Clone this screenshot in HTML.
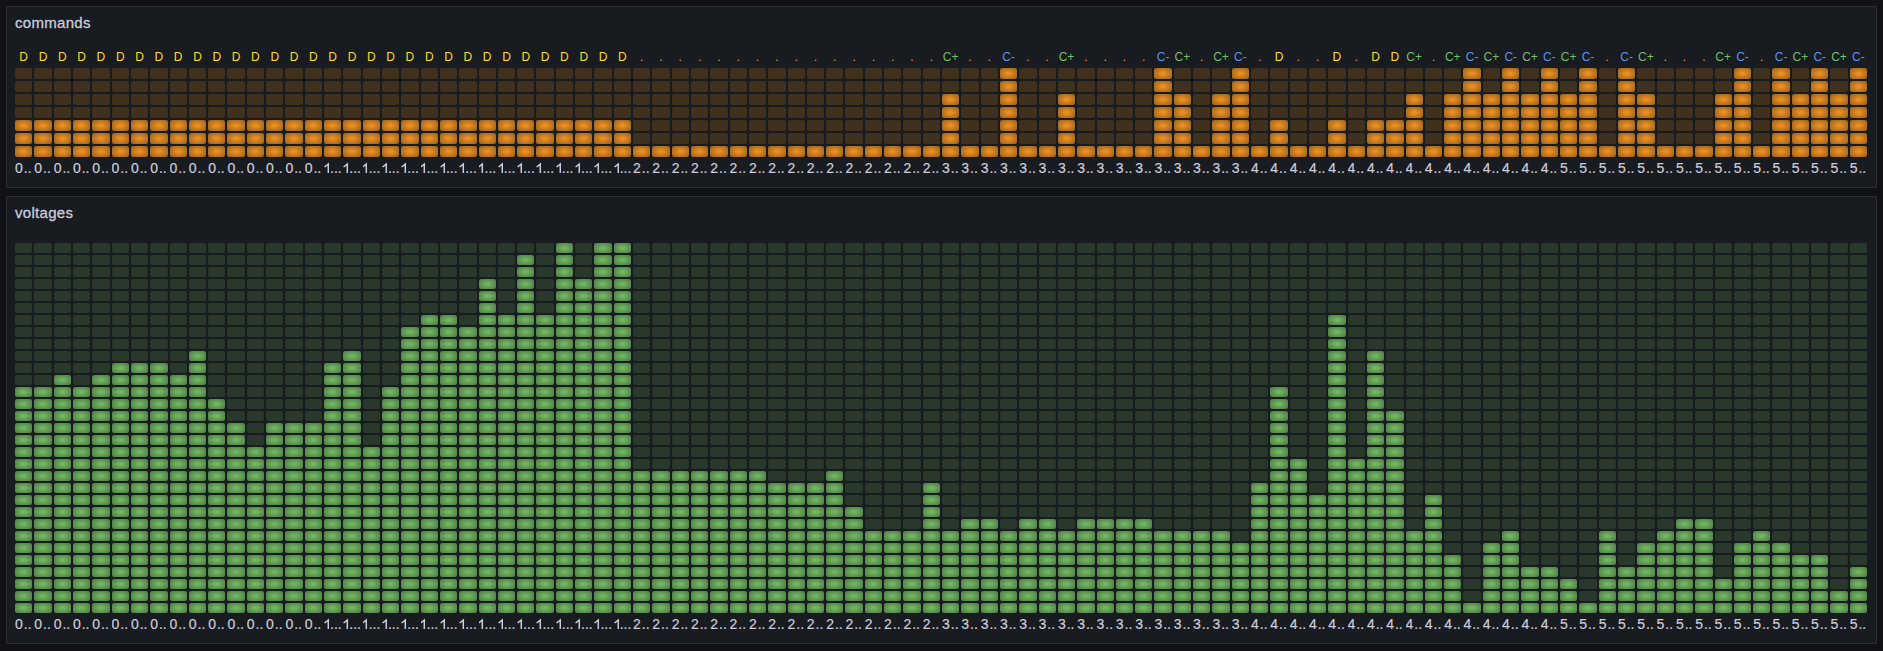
<!DOCTYPE html><html><head><meta charset="utf-8"><style>

*{box-sizing:border-box;margin:0;padding:0}
html,body{width:1883px;height:651px;overflow:hidden;background:#111217;font-family:"Liberation Sans",sans-serif;color:#ccccdc}
.p{position:absolute;left:6px;width:1871px;background:#181b1f;border:1px solid rgba(204,204,220,0.12);border-radius:2px}
.t{position:absolute;left:8px;font-size:15px;letter-spacing:0.3px;line-height:18px;white-space:nowrap;-webkit-text-stroke:0.3px #ccccdc}
.row{position:absolute;left:15px;width:1853px;display:flex;justify-content:space-between}
.c{width:17.322916px;display:flex;flex-direction:column;position:relative}
.v{height:18px;display:flex;align-items:center;justify-content:center;font-size:12px;line-height:1;white-space:nowrap;overflow:visible}
.r1 i{display:block;margin-top:2px;height:11px;border-radius:2px;}
.r2 i{display:block;margin-top:2px;height:10px;border-radius:2px;}
.r1 i{background:rgba(248,150,32,0.18)}
.r1 i.l{background:radial-gradient(rgba(248,150,32,0.95) 10%,rgba(248,150,32,0.55))}
.r2 i{background:rgba(118,192,100,0.18)}
.r2 i.l{background:radial-gradient(rgba(118,192,100,0.95) 10%,rgba(118,192,100,0.55))}
.n{position:absolute;left:0;width:17.322916px;overflow:hidden;height:21px;font-size:14px;line-height:21px;white-space:nowrap;-webkit-text-stroke:0.2px #ccccdc}

</style></head><body>
<div class="p" style="top:6px;height:182px"><div class="t" style="top:7px">commands</div></div>
<div class="p" style="top:196px;height:448px"><div class="t" style="top:7px">voltages</div></div>
<div class="row r1" style="top:48px;height:132px">
<div class="c"><div class="v" style="color:#FADE2A">D</div><i></i><i></i><i></i><i></i><i class="l"></i><i class="l"></i><i class="l"></i><div class="n" style="top:110px">0<span style="margin-left:1px">..</span></div></div>
<div class="c"><div class="v" style="color:#FADE2A">D</div><i></i><i></i><i></i><i></i><i class="l"></i><i class="l"></i><i class="l"></i><div class="n" style="top:110px">0<span style="margin-left:1px">..</span></div></div>
<div class="c"><div class="v" style="color:#FADE2A">D</div><i></i><i></i><i></i><i></i><i class="l"></i><i class="l"></i><i class="l"></i><div class="n" style="top:110px">0<span style="margin-left:1px">..</span></div></div>
<div class="c"><div class="v" style="color:#FADE2A">D</div><i></i><i></i><i></i><i></i><i class="l"></i><i class="l"></i><i class="l"></i><div class="n" style="top:110px">0<span style="margin-left:1px">..</span></div></div>
<div class="c"><div class="v" style="color:#FADE2A">D</div><i></i><i></i><i></i><i></i><i class="l"></i><i class="l"></i><i class="l"></i><div class="n" style="top:110px">0<span style="margin-left:1px">..</span></div></div>
<div class="c"><div class="v" style="color:#FADE2A">D</div><i></i><i></i><i></i><i></i><i class="l"></i><i class="l"></i><i class="l"></i><div class="n" style="top:110px">0<span style="margin-left:1px">..</span></div></div>
<div class="c"><div class="v" style="color:#FADE2A">D</div><i></i><i></i><i></i><i></i><i class="l"></i><i class="l"></i><i class="l"></i><div class="n" style="top:110px">0<span style="margin-left:1px">..</span></div></div>
<div class="c"><div class="v" style="color:#FADE2A">D</div><i></i><i></i><i></i><i></i><i class="l"></i><i class="l"></i><i class="l"></i><div class="n" style="top:110px">0<span style="margin-left:1px">..</span></div></div>
<div class="c"><div class="v" style="color:#FADE2A">D</div><i></i><i></i><i></i><i></i><i class="l"></i><i class="l"></i><i class="l"></i><div class="n" style="top:110px">0<span style="margin-left:1px">..</span></div></div>
<div class="c"><div class="v" style="color:#FADE2A">D</div><i></i><i></i><i></i><i></i><i class="l"></i><i class="l"></i><i class="l"></i><div class="n" style="top:110px">0<span style="margin-left:1px">..</span></div></div>
<div class="c"><div class="v" style="color:#FADE2A">D</div><i></i><i></i><i></i><i></i><i class="l"></i><i class="l"></i><i class="l"></i><div class="n" style="top:110px">0<span style="margin-left:1px">..</span></div></div>
<div class="c"><div class="v" style="color:#FADE2A">D</div><i></i><i></i><i></i><i></i><i class="l"></i><i class="l"></i><i class="l"></i><div class="n" style="top:110px">0<span style="margin-left:1px">..</span></div></div>
<div class="c"><div class="v" style="color:#FADE2A">D</div><i></i><i></i><i></i><i></i><i class="l"></i><i class="l"></i><i class="l"></i><div class="n" style="top:110px">0<span style="margin-left:1px">..</span></div></div>
<div class="c"><div class="v" style="color:#FADE2A">D</div><i></i><i></i><i></i><i></i><i class="l"></i><i class="l"></i><i class="l"></i><div class="n" style="top:110px">0<span style="margin-left:1px">..</span></div></div>
<div class="c"><div class="v" style="color:#FADE2A">D</div><i></i><i></i><i></i><i></i><i class="l"></i><i class="l"></i><i class="l"></i><div class="n" style="top:110px">0<span style="margin-left:1px">..</span></div></div>
<div class="c"><div class="v" style="color:#FADE2A">D</div><i></i><i></i><i></i><i></i><i class="l"></i><i class="l"></i><i class="l"></i><div class="n" style="top:110px">0<span style="margin-left:1px">..</span></div></div>
<div class="c"><div class="v" style="color:#FADE2A">D</div><i></i><i></i><i></i><i></i><i class="l"></i><i class="l"></i><i class="l"></i><div class="n" style="top:110px"><svg width="5.6" height="11" viewBox="0 0 5.6 11" style="vertical-align:0;margin-left:-0.2px"><path d="M0.6 5.0 L4.3 2.1 L4.3 11" fill="none" stroke="#ccccdc" stroke-width="1.5"/></svg><span style="margin-left:0.6px">...</span></div></div>
<div class="c"><div class="v" style="color:#FADE2A">D</div><i></i><i></i><i></i><i></i><i class="l"></i><i class="l"></i><i class="l"></i><div class="n" style="top:110px"><svg width="5.6" height="11" viewBox="0 0 5.6 11" style="vertical-align:0;margin-left:-0.2px"><path d="M0.6 5.0 L4.3 2.1 L4.3 11" fill="none" stroke="#ccccdc" stroke-width="1.5"/></svg><span style="margin-left:0.6px">...</span></div></div>
<div class="c"><div class="v" style="color:#FADE2A">D</div><i></i><i></i><i></i><i></i><i class="l"></i><i class="l"></i><i class="l"></i><div class="n" style="top:110px"><svg width="5.6" height="11" viewBox="0 0 5.6 11" style="vertical-align:0;margin-left:-0.2px"><path d="M0.6 5.0 L4.3 2.1 L4.3 11" fill="none" stroke="#ccccdc" stroke-width="1.5"/></svg><span style="margin-left:0.6px">...</span></div></div>
<div class="c"><div class="v" style="color:#FADE2A">D</div><i></i><i></i><i></i><i></i><i class="l"></i><i class="l"></i><i class="l"></i><div class="n" style="top:110px"><svg width="5.6" height="11" viewBox="0 0 5.6 11" style="vertical-align:0;margin-left:-0.2px"><path d="M0.6 5.0 L4.3 2.1 L4.3 11" fill="none" stroke="#ccccdc" stroke-width="1.5"/></svg><span style="margin-left:0.6px">...</span></div></div>
<div class="c"><div class="v" style="color:#FADE2A">D</div><i></i><i></i><i></i><i></i><i class="l"></i><i class="l"></i><i class="l"></i><div class="n" style="top:110px"><svg width="5.6" height="11" viewBox="0 0 5.6 11" style="vertical-align:0;margin-left:-0.2px"><path d="M0.6 5.0 L4.3 2.1 L4.3 11" fill="none" stroke="#ccccdc" stroke-width="1.5"/></svg><span style="margin-left:0.6px">...</span></div></div>
<div class="c"><div class="v" style="color:#FADE2A">D</div><i></i><i></i><i></i><i></i><i class="l"></i><i class="l"></i><i class="l"></i><div class="n" style="top:110px"><svg width="5.6" height="11" viewBox="0 0 5.6 11" style="vertical-align:0;margin-left:-0.2px"><path d="M0.6 5.0 L4.3 2.1 L4.3 11" fill="none" stroke="#ccccdc" stroke-width="1.5"/></svg><span style="margin-left:0.6px">...</span></div></div>
<div class="c"><div class="v" style="color:#FADE2A">D</div><i></i><i></i><i></i><i></i><i class="l"></i><i class="l"></i><i class="l"></i><div class="n" style="top:110px"><svg width="5.6" height="11" viewBox="0 0 5.6 11" style="vertical-align:0;margin-left:-0.2px"><path d="M0.6 5.0 L4.3 2.1 L4.3 11" fill="none" stroke="#ccccdc" stroke-width="1.5"/></svg><span style="margin-left:0.6px">...</span></div></div>
<div class="c"><div class="v" style="color:#FADE2A">D</div><i></i><i></i><i></i><i></i><i class="l"></i><i class="l"></i><i class="l"></i><div class="n" style="top:110px"><svg width="5.6" height="11" viewBox="0 0 5.6 11" style="vertical-align:0;margin-left:-0.2px"><path d="M0.6 5.0 L4.3 2.1 L4.3 11" fill="none" stroke="#ccccdc" stroke-width="1.5"/></svg><span style="margin-left:0.6px">...</span></div></div>
<div class="c"><div class="v" style="color:#FADE2A">D</div><i></i><i></i><i></i><i></i><i class="l"></i><i class="l"></i><i class="l"></i><div class="n" style="top:110px"><svg width="5.6" height="11" viewBox="0 0 5.6 11" style="vertical-align:0;margin-left:-0.2px"><path d="M0.6 5.0 L4.3 2.1 L4.3 11" fill="none" stroke="#ccccdc" stroke-width="1.5"/></svg><span style="margin-left:0.6px">...</span></div></div>
<div class="c"><div class="v" style="color:#FADE2A">D</div><i></i><i></i><i></i><i></i><i class="l"></i><i class="l"></i><i class="l"></i><div class="n" style="top:110px"><svg width="5.6" height="11" viewBox="0 0 5.6 11" style="vertical-align:0;margin-left:-0.2px"><path d="M0.6 5.0 L4.3 2.1 L4.3 11" fill="none" stroke="#ccccdc" stroke-width="1.5"/></svg><span style="margin-left:0.6px">...</span></div></div>
<div class="c"><div class="v" style="color:#FADE2A">D</div><i></i><i></i><i></i><i></i><i class="l"></i><i class="l"></i><i class="l"></i><div class="n" style="top:110px"><svg width="5.6" height="11" viewBox="0 0 5.6 11" style="vertical-align:0;margin-left:-0.2px"><path d="M0.6 5.0 L4.3 2.1 L4.3 11" fill="none" stroke="#ccccdc" stroke-width="1.5"/></svg><span style="margin-left:0.6px">...</span></div></div>
<div class="c"><div class="v" style="color:#FADE2A">D</div><i></i><i></i><i></i><i></i><i class="l"></i><i class="l"></i><i class="l"></i><div class="n" style="top:110px"><svg width="5.6" height="11" viewBox="0 0 5.6 11" style="vertical-align:0;margin-left:-0.2px"><path d="M0.6 5.0 L4.3 2.1 L4.3 11" fill="none" stroke="#ccccdc" stroke-width="1.5"/></svg><span style="margin-left:0.6px">...</span></div></div>
<div class="c"><div class="v" style="color:#FADE2A">D</div><i></i><i></i><i></i><i></i><i class="l"></i><i class="l"></i><i class="l"></i><div class="n" style="top:110px"><svg width="5.6" height="11" viewBox="0 0 5.6 11" style="vertical-align:0;margin-left:-0.2px"><path d="M0.6 5.0 L4.3 2.1 L4.3 11" fill="none" stroke="#ccccdc" stroke-width="1.5"/></svg><span style="margin-left:0.6px">...</span></div></div>
<div class="c"><div class="v" style="color:#FADE2A">D</div><i></i><i></i><i></i><i></i><i class="l"></i><i class="l"></i><i class="l"></i><div class="n" style="top:110px"><svg width="5.6" height="11" viewBox="0 0 5.6 11" style="vertical-align:0;margin-left:-0.2px"><path d="M0.6 5.0 L4.3 2.1 L4.3 11" fill="none" stroke="#ccccdc" stroke-width="1.5"/></svg><span style="margin-left:0.6px">...</span></div></div>
<div class="c"><div class="v" style="color:#FADE2A">D</div><i></i><i></i><i></i><i></i><i class="l"></i><i class="l"></i><i class="l"></i><div class="n" style="top:110px"><svg width="5.6" height="11" viewBox="0 0 5.6 11" style="vertical-align:0;margin-left:-0.2px"><path d="M0.6 5.0 L4.3 2.1 L4.3 11" fill="none" stroke="#ccccdc" stroke-width="1.5"/></svg><span style="margin-left:0.6px">...</span></div></div>
<div class="c"><div class="v" style="color:#FADE2A">D</div><i></i><i></i><i></i><i></i><i class="l"></i><i class="l"></i><i class="l"></i><div class="n" style="top:110px"><svg width="5.6" height="11" viewBox="0 0 5.6 11" style="vertical-align:0;margin-left:-0.2px"><path d="M0.6 5.0 L4.3 2.1 L4.3 11" fill="none" stroke="#ccccdc" stroke-width="1.5"/></svg><span style="margin-left:0.6px">...</span></div></div>
<div class="c"><div class="v" style="color:#FF9428">.</div><i></i><i></i><i></i><i></i><i></i><i></i><i class="l"></i><div class="n" style="top:110px">2<span style="margin-left:1px">..</span></div></div>
<div class="c"><div class="v" style="color:#FF9428">.</div><i></i><i></i><i></i><i></i><i></i><i></i><i class="l"></i><div class="n" style="top:110px">2<span style="margin-left:1px">..</span></div></div>
<div class="c"><div class="v" style="color:#FF9428">.</div><i></i><i></i><i></i><i></i><i></i><i></i><i class="l"></i><div class="n" style="top:110px">2<span style="margin-left:1px">..</span></div></div>
<div class="c"><div class="v" style="color:#FF9428">.</div><i></i><i></i><i></i><i></i><i></i><i></i><i class="l"></i><div class="n" style="top:110px">2<span style="margin-left:1px">..</span></div></div>
<div class="c"><div class="v" style="color:#FF9428">.</div><i></i><i></i><i></i><i></i><i></i><i></i><i class="l"></i><div class="n" style="top:110px">2<span style="margin-left:1px">..</span></div></div>
<div class="c"><div class="v" style="color:#FF9428">.</div><i></i><i></i><i></i><i></i><i></i><i></i><i class="l"></i><div class="n" style="top:110px">2<span style="margin-left:1px">..</span></div></div>
<div class="c"><div class="v" style="color:#FF9428">.</div><i></i><i></i><i></i><i></i><i></i><i></i><i class="l"></i><div class="n" style="top:110px">2<span style="margin-left:1px">..</span></div></div>
<div class="c"><div class="v" style="color:#FF9428">.</div><i></i><i></i><i></i><i></i><i></i><i></i><i class="l"></i><div class="n" style="top:110px">2<span style="margin-left:1px">..</span></div></div>
<div class="c"><div class="v" style="color:#FF9428">.</div><i></i><i></i><i></i><i></i><i></i><i></i><i class="l"></i><div class="n" style="top:110px">2<span style="margin-left:1px">..</span></div></div>
<div class="c"><div class="v" style="color:#FF9428">.</div><i></i><i></i><i></i><i></i><i></i><i></i><i class="l"></i><div class="n" style="top:110px">2<span style="margin-left:1px">..</span></div></div>
<div class="c"><div class="v" style="color:#FF9428">.</div><i></i><i></i><i></i><i></i><i></i><i></i><i class="l"></i><div class="n" style="top:110px">2<span style="margin-left:1px">..</span></div></div>
<div class="c"><div class="v" style="color:#FF9428">.</div><i></i><i></i><i></i><i></i><i></i><i></i><i class="l"></i><div class="n" style="top:110px">2<span style="margin-left:1px">..</span></div></div>
<div class="c"><div class="v" style="color:#FF9428">.</div><i></i><i></i><i></i><i></i><i></i><i></i><i class="l"></i><div class="n" style="top:110px">2<span style="margin-left:1px">..</span></div></div>
<div class="c"><div class="v" style="color:#FF9428">.</div><i></i><i></i><i></i><i></i><i></i><i></i><i class="l"></i><div class="n" style="top:110px">2<span style="margin-left:1px">..</span></div></div>
<div class="c"><div class="v" style="color:#FF9428">.</div><i></i><i></i><i></i><i></i><i></i><i></i><i class="l"></i><div class="n" style="top:110px">2<span style="margin-left:1px">..</span></div></div>
<div class="c"><div class="v" style="color:#FF9428">.</div><i></i><i></i><i></i><i></i><i></i><i></i><i class="l"></i><div class="n" style="top:110px">2<span style="margin-left:1px">..</span></div></div>
<div class="c"><div class="v" style="color:#73BF69">C+</div><i></i><i></i><i class="l"></i><i class="l"></i><i class="l"></i><i class="l"></i><i class="l"></i><div class="n" style="top:110px">3<span style="margin-left:1px">..</span></div></div>
<div class="c"><div class="v" style="color:#FF9428">.</div><i></i><i></i><i></i><i></i><i></i><i></i><i class="l"></i><div class="n" style="top:110px">3<span style="margin-left:1px">..</span></div></div>
<div class="c"><div class="v" style="color:#FF9428">.</div><i></i><i></i><i></i><i></i><i></i><i></i><i class="l"></i><div class="n" style="top:110px">3<span style="margin-left:1px">..</span></div></div>
<div class="c"><div class="v" style="color:#5794F2">C-</div><i class="l"></i><i class="l"></i><i class="l"></i><i class="l"></i><i class="l"></i><i class="l"></i><i class="l"></i><div class="n" style="top:110px">3<span style="margin-left:1px">..</span></div></div>
<div class="c"><div class="v" style="color:#FF9428">.</div><i></i><i></i><i></i><i></i><i></i><i></i><i class="l"></i><div class="n" style="top:110px">3<span style="margin-left:1px">..</span></div></div>
<div class="c"><div class="v" style="color:#FF9428">.</div><i></i><i></i><i></i><i></i><i></i><i></i><i class="l"></i><div class="n" style="top:110px">3<span style="margin-left:1px">..</span></div></div>
<div class="c"><div class="v" style="color:#73BF69">C+</div><i></i><i></i><i class="l"></i><i class="l"></i><i class="l"></i><i class="l"></i><i class="l"></i><div class="n" style="top:110px">3<span style="margin-left:1px">..</span></div></div>
<div class="c"><div class="v" style="color:#FF9428">.</div><i></i><i></i><i></i><i></i><i></i><i></i><i class="l"></i><div class="n" style="top:110px">3<span style="margin-left:1px">..</span></div></div>
<div class="c"><div class="v" style="color:#FF9428">.</div><i></i><i></i><i></i><i></i><i></i><i></i><i class="l"></i><div class="n" style="top:110px">3<span style="margin-left:1px">..</span></div></div>
<div class="c"><div class="v" style="color:#FF9428">.</div><i></i><i></i><i></i><i></i><i></i><i></i><i class="l"></i><div class="n" style="top:110px">3<span style="margin-left:1px">..</span></div></div>
<div class="c"><div class="v" style="color:#FF9428">.</div><i></i><i></i><i></i><i></i><i></i><i></i><i class="l"></i><div class="n" style="top:110px">3<span style="margin-left:1px">..</span></div></div>
<div class="c"><div class="v" style="color:#5794F2">C-</div><i class="l"></i><i class="l"></i><i class="l"></i><i class="l"></i><i class="l"></i><i class="l"></i><i class="l"></i><div class="n" style="top:110px">3<span style="margin-left:1px">..</span></div></div>
<div class="c"><div class="v" style="color:#73BF69">C+</div><i></i><i></i><i class="l"></i><i class="l"></i><i class="l"></i><i class="l"></i><i class="l"></i><div class="n" style="top:110px">3<span style="margin-left:1px">..</span></div></div>
<div class="c"><div class="v" style="color:#FF9428">.</div><i></i><i></i><i></i><i></i><i></i><i></i><i class="l"></i><div class="n" style="top:110px">3<span style="margin-left:1px">..</span></div></div>
<div class="c"><div class="v" style="color:#73BF69">C+</div><i></i><i></i><i class="l"></i><i class="l"></i><i class="l"></i><i class="l"></i><i class="l"></i><div class="n" style="top:110px">3<span style="margin-left:1px">..</span></div></div>
<div class="c"><div class="v" style="color:#5794F2">C-</div><i class="l"></i><i class="l"></i><i class="l"></i><i class="l"></i><i class="l"></i><i class="l"></i><i class="l"></i><div class="n" style="top:110px">3<span style="margin-left:1px">..</span></div></div>
<div class="c"><div class="v" style="color:#FF9428">.</div><i></i><i></i><i></i><i></i><i></i><i></i><i class="l"></i><div class="n" style="top:110px">4<span style="margin-left:1px">..</span></div></div>
<div class="c"><div class="v" style="color:#FADE2A">D</div><i></i><i></i><i></i><i></i><i class="l"></i><i class="l"></i><i class="l"></i><div class="n" style="top:110px">4<span style="margin-left:1px">..</span></div></div>
<div class="c"><div class="v" style="color:#FF9428">.</div><i></i><i></i><i></i><i></i><i></i><i></i><i class="l"></i><div class="n" style="top:110px">4<span style="margin-left:1px">..</span></div></div>
<div class="c"><div class="v" style="color:#FF9428">.</div><i></i><i></i><i></i><i></i><i></i><i></i><i class="l"></i><div class="n" style="top:110px">4<span style="margin-left:1px">..</span></div></div>
<div class="c"><div class="v" style="color:#FADE2A">D</div><i></i><i></i><i></i><i></i><i class="l"></i><i class="l"></i><i class="l"></i><div class="n" style="top:110px">4<span style="margin-left:1px">..</span></div></div>
<div class="c"><div class="v" style="color:#FF9428">.</div><i></i><i></i><i></i><i></i><i></i><i></i><i class="l"></i><div class="n" style="top:110px">4<span style="margin-left:1px">..</span></div></div>
<div class="c"><div class="v" style="color:#FADE2A">D</div><i></i><i></i><i></i><i></i><i class="l"></i><i class="l"></i><i class="l"></i><div class="n" style="top:110px">4<span style="margin-left:1px">..</span></div></div>
<div class="c"><div class="v" style="color:#FADE2A">D</div><i></i><i></i><i></i><i></i><i class="l"></i><i class="l"></i><i class="l"></i><div class="n" style="top:110px">4<span style="margin-left:1px">..</span></div></div>
<div class="c"><div class="v" style="color:#73BF69">C+</div><i></i><i></i><i class="l"></i><i class="l"></i><i class="l"></i><i class="l"></i><i class="l"></i><div class="n" style="top:110px">4<span style="margin-left:1px">..</span></div></div>
<div class="c"><div class="v" style="color:#FF9428">.</div><i></i><i></i><i></i><i></i><i></i><i></i><i class="l"></i><div class="n" style="top:110px">4<span style="margin-left:1px">..</span></div></div>
<div class="c"><div class="v" style="color:#73BF69">C+</div><i></i><i></i><i class="l"></i><i class="l"></i><i class="l"></i><i class="l"></i><i class="l"></i><div class="n" style="top:110px">4<span style="margin-left:1px">..</span></div></div>
<div class="c"><div class="v" style="color:#5794F2">C-</div><i class="l"></i><i class="l"></i><i class="l"></i><i class="l"></i><i class="l"></i><i class="l"></i><i class="l"></i><div class="n" style="top:110px">4<span style="margin-left:1px">..</span></div></div>
<div class="c"><div class="v" style="color:#73BF69">C+</div><i></i><i></i><i class="l"></i><i class="l"></i><i class="l"></i><i class="l"></i><i class="l"></i><div class="n" style="top:110px">4<span style="margin-left:1px">..</span></div></div>
<div class="c"><div class="v" style="color:#5794F2">C-</div><i class="l"></i><i class="l"></i><i class="l"></i><i class="l"></i><i class="l"></i><i class="l"></i><i class="l"></i><div class="n" style="top:110px">4<span style="margin-left:1px">..</span></div></div>
<div class="c"><div class="v" style="color:#73BF69">C+</div><i></i><i></i><i class="l"></i><i class="l"></i><i class="l"></i><i class="l"></i><i class="l"></i><div class="n" style="top:110px">4<span style="margin-left:1px">..</span></div></div>
<div class="c"><div class="v" style="color:#5794F2">C-</div><i class="l"></i><i class="l"></i><i class="l"></i><i class="l"></i><i class="l"></i><i class="l"></i><i class="l"></i><div class="n" style="top:110px">4<span style="margin-left:1px">..</span></div></div>
<div class="c"><div class="v" style="color:#73BF69">C+</div><i></i><i></i><i class="l"></i><i class="l"></i><i class="l"></i><i class="l"></i><i class="l"></i><div class="n" style="top:110px">5<span style="margin-left:1px">..</span></div></div>
<div class="c"><div class="v" style="color:#5794F2">C-</div><i class="l"></i><i class="l"></i><i class="l"></i><i class="l"></i><i class="l"></i><i class="l"></i><i class="l"></i><div class="n" style="top:110px">5<span style="margin-left:1px">..</span></div></div>
<div class="c"><div class="v" style="color:#FF9428">.</div><i></i><i></i><i></i><i></i><i></i><i></i><i class="l"></i><div class="n" style="top:110px">5<span style="margin-left:1px">..</span></div></div>
<div class="c"><div class="v" style="color:#5794F2">C-</div><i class="l"></i><i class="l"></i><i class="l"></i><i class="l"></i><i class="l"></i><i class="l"></i><i class="l"></i><div class="n" style="top:110px">5<span style="margin-left:1px">..</span></div></div>
<div class="c"><div class="v" style="color:#73BF69">C+</div><i></i><i></i><i class="l"></i><i class="l"></i><i class="l"></i><i class="l"></i><i class="l"></i><div class="n" style="top:110px">5<span style="margin-left:1px">..</span></div></div>
<div class="c"><div class="v" style="color:#FF9428">.</div><i></i><i></i><i></i><i></i><i></i><i></i><i class="l"></i><div class="n" style="top:110px">5<span style="margin-left:1px">..</span></div></div>
<div class="c"><div class="v" style="color:#FF9428">.</div><i></i><i></i><i></i><i></i><i></i><i></i><i class="l"></i><div class="n" style="top:110px">5<span style="margin-left:1px">..</span></div></div>
<div class="c"><div class="v" style="color:#FF9428">.</div><i></i><i></i><i></i><i></i><i></i><i></i><i class="l"></i><div class="n" style="top:110px">5<span style="margin-left:1px">..</span></div></div>
<div class="c"><div class="v" style="color:#73BF69">C+</div><i></i><i></i><i class="l"></i><i class="l"></i><i class="l"></i><i class="l"></i><i class="l"></i><div class="n" style="top:110px">5<span style="margin-left:1px">..</span></div></div>
<div class="c"><div class="v" style="color:#5794F2">C-</div><i class="l"></i><i class="l"></i><i class="l"></i><i class="l"></i><i class="l"></i><i class="l"></i><i class="l"></i><div class="n" style="top:110px">5<span style="margin-left:1px">..</span></div></div>
<div class="c"><div class="v" style="color:#FF9428">.</div><i></i><i></i><i></i><i></i><i></i><i></i><i class="l"></i><div class="n" style="top:110px">5<span style="margin-left:1px">..</span></div></div>
<div class="c"><div class="v" style="color:#5794F2">C-</div><i class="l"></i><i class="l"></i><i class="l"></i><i class="l"></i><i class="l"></i><i class="l"></i><i class="l"></i><div class="n" style="top:110px">5<span style="margin-left:1px">..</span></div></div>
<div class="c"><div class="v" style="color:#73BF69">C+</div><i></i><i></i><i class="l"></i><i class="l"></i><i class="l"></i><i class="l"></i><i class="l"></i><div class="n" style="top:110px">5<span style="margin-left:1px">..</span></div></div>
<div class="c"><div class="v" style="color:#5794F2">C-</div><i class="l"></i><i class="l"></i><i class="l"></i><i class="l"></i><i class="l"></i><i class="l"></i><i class="l"></i><div class="n" style="top:110px">5<span style="margin-left:1px">..</span></div></div>
<div class="c"><div class="v" style="color:#73BF69">C+</div><i></i><i></i><i class="l"></i><i class="l"></i><i class="l"></i><i class="l"></i><i class="l"></i><div class="n" style="top:110px">5<span style="margin-left:1px">..</span></div></div>
<div class="c"><div class="v" style="color:#5794F2">C-</div><i class="l"></i><i class="l"></i><i class="l"></i><i class="l"></i><i class="l"></i><i class="l"></i><i class="l"></i><div class="n" style="top:110px">5<span style="margin-left:1px">..</span></div></div>
</div>
<div class="row r2" style="top:236px;height:398px">
<div class="c"><div style="height:5px"></div><i></i><i></i><i></i><i></i><i></i><i></i><i></i><i></i><i></i><i></i><i></i><i></i><i class="l"></i><i class="l"></i><i class="l"></i><i class="l"></i><i class="l"></i><i class="l"></i><i class="l"></i><i class="l"></i><i class="l"></i><i class="l"></i><i class="l"></i><i class="l"></i><i class="l"></i><i class="l"></i><i class="l"></i><i class="l"></i><i class="l"></i><i class="l"></i><i class="l"></i><div class="n" style="top:378px">0<span style="margin-left:1px">..</span></div></div>
<div class="c"><div style="height:5px"></div><i></i><i></i><i></i><i></i><i></i><i></i><i></i><i></i><i></i><i></i><i></i><i></i><i class="l"></i><i class="l"></i><i class="l"></i><i class="l"></i><i class="l"></i><i class="l"></i><i class="l"></i><i class="l"></i><i class="l"></i><i class="l"></i><i class="l"></i><i class="l"></i><i class="l"></i><i class="l"></i><i class="l"></i><i class="l"></i><i class="l"></i><i class="l"></i><i class="l"></i><div class="n" style="top:378px">0<span style="margin-left:1px">..</span></div></div>
<div class="c"><div style="height:5px"></div><i></i><i></i><i></i><i></i><i></i><i></i><i></i><i></i><i></i><i></i><i></i><i class="l"></i><i class="l"></i><i class="l"></i><i class="l"></i><i class="l"></i><i class="l"></i><i class="l"></i><i class="l"></i><i class="l"></i><i class="l"></i><i class="l"></i><i class="l"></i><i class="l"></i><i class="l"></i><i class="l"></i><i class="l"></i><i class="l"></i><i class="l"></i><i class="l"></i><i class="l"></i><div class="n" style="top:378px">0<span style="margin-left:1px">..</span></div></div>
<div class="c"><div style="height:5px"></div><i></i><i></i><i></i><i></i><i></i><i></i><i></i><i></i><i></i><i></i><i></i><i></i><i class="l"></i><i class="l"></i><i class="l"></i><i class="l"></i><i class="l"></i><i class="l"></i><i class="l"></i><i class="l"></i><i class="l"></i><i class="l"></i><i class="l"></i><i class="l"></i><i class="l"></i><i class="l"></i><i class="l"></i><i class="l"></i><i class="l"></i><i class="l"></i><i class="l"></i><div class="n" style="top:378px">0<span style="margin-left:1px">..</span></div></div>
<div class="c"><div style="height:5px"></div><i></i><i></i><i></i><i></i><i></i><i></i><i></i><i></i><i></i><i></i><i></i><i class="l"></i><i class="l"></i><i class="l"></i><i class="l"></i><i class="l"></i><i class="l"></i><i class="l"></i><i class="l"></i><i class="l"></i><i class="l"></i><i class="l"></i><i class="l"></i><i class="l"></i><i class="l"></i><i class="l"></i><i class="l"></i><i class="l"></i><i class="l"></i><i class="l"></i><i class="l"></i><div class="n" style="top:378px">0<span style="margin-left:1px">..</span></div></div>
<div class="c"><div style="height:5px"></div><i></i><i></i><i></i><i></i><i></i><i></i><i></i><i></i><i></i><i></i><i class="l"></i><i class="l"></i><i class="l"></i><i class="l"></i><i class="l"></i><i class="l"></i><i class="l"></i><i class="l"></i><i class="l"></i><i class="l"></i><i class="l"></i><i class="l"></i><i class="l"></i><i class="l"></i><i class="l"></i><i class="l"></i><i class="l"></i><i class="l"></i><i class="l"></i><i class="l"></i><i class="l"></i><div class="n" style="top:378px">0<span style="margin-left:1px">..</span></div></div>
<div class="c"><div style="height:5px"></div><i></i><i></i><i></i><i></i><i></i><i></i><i></i><i></i><i></i><i></i><i class="l"></i><i class="l"></i><i class="l"></i><i class="l"></i><i class="l"></i><i class="l"></i><i class="l"></i><i class="l"></i><i class="l"></i><i class="l"></i><i class="l"></i><i class="l"></i><i class="l"></i><i class="l"></i><i class="l"></i><i class="l"></i><i class="l"></i><i class="l"></i><i class="l"></i><i class="l"></i><i class="l"></i><div class="n" style="top:378px">0<span style="margin-left:1px">..</span></div></div>
<div class="c"><div style="height:5px"></div><i></i><i></i><i></i><i></i><i></i><i></i><i></i><i></i><i></i><i></i><i class="l"></i><i class="l"></i><i class="l"></i><i class="l"></i><i class="l"></i><i class="l"></i><i class="l"></i><i class="l"></i><i class="l"></i><i class="l"></i><i class="l"></i><i class="l"></i><i class="l"></i><i class="l"></i><i class="l"></i><i class="l"></i><i class="l"></i><i class="l"></i><i class="l"></i><i class="l"></i><i class="l"></i><div class="n" style="top:378px">0<span style="margin-left:1px">..</span></div></div>
<div class="c"><div style="height:5px"></div><i></i><i></i><i></i><i></i><i></i><i></i><i></i><i></i><i></i><i></i><i></i><i class="l"></i><i class="l"></i><i class="l"></i><i class="l"></i><i class="l"></i><i class="l"></i><i class="l"></i><i class="l"></i><i class="l"></i><i class="l"></i><i class="l"></i><i class="l"></i><i class="l"></i><i class="l"></i><i class="l"></i><i class="l"></i><i class="l"></i><i class="l"></i><i class="l"></i><i class="l"></i><div class="n" style="top:378px">0<span style="margin-left:1px">..</span></div></div>
<div class="c"><div style="height:5px"></div><i></i><i></i><i></i><i></i><i></i><i></i><i></i><i></i><i></i><i class="l"></i><i class="l"></i><i class="l"></i><i class="l"></i><i class="l"></i><i class="l"></i><i class="l"></i><i class="l"></i><i class="l"></i><i class="l"></i><i class="l"></i><i class="l"></i><i class="l"></i><i class="l"></i><i class="l"></i><i class="l"></i><i class="l"></i><i class="l"></i><i class="l"></i><i class="l"></i><i class="l"></i><i class="l"></i><div class="n" style="top:378px">0<span style="margin-left:1px">..</span></div></div>
<div class="c"><div style="height:5px"></div><i></i><i></i><i></i><i></i><i></i><i></i><i></i><i></i><i></i><i></i><i></i><i></i><i></i><i class="l"></i><i class="l"></i><i class="l"></i><i class="l"></i><i class="l"></i><i class="l"></i><i class="l"></i><i class="l"></i><i class="l"></i><i class="l"></i><i class="l"></i><i class="l"></i><i class="l"></i><i class="l"></i><i class="l"></i><i class="l"></i><i class="l"></i><i class="l"></i><div class="n" style="top:378px">0<span style="margin-left:1px">..</span></div></div>
<div class="c"><div style="height:5px"></div><i></i><i></i><i></i><i></i><i></i><i></i><i></i><i></i><i></i><i></i><i></i><i></i><i></i><i></i><i></i><i class="l"></i><i class="l"></i><i class="l"></i><i class="l"></i><i class="l"></i><i class="l"></i><i class="l"></i><i class="l"></i><i class="l"></i><i class="l"></i><i class="l"></i><i class="l"></i><i class="l"></i><i class="l"></i><i class="l"></i><i class="l"></i><div class="n" style="top:378px">0<span style="margin-left:1px">..</span></div></div>
<div class="c"><div style="height:5px"></div><i></i><i></i><i></i><i></i><i></i><i></i><i></i><i></i><i></i><i></i><i></i><i></i><i></i><i></i><i></i><i></i><i></i><i class="l"></i><i class="l"></i><i class="l"></i><i class="l"></i><i class="l"></i><i class="l"></i><i class="l"></i><i class="l"></i><i class="l"></i><i class="l"></i><i class="l"></i><i class="l"></i><i class="l"></i><i class="l"></i><div class="n" style="top:378px">0<span style="margin-left:1px">..</span></div></div>
<div class="c"><div style="height:5px"></div><i></i><i></i><i></i><i></i><i></i><i></i><i></i><i></i><i></i><i></i><i></i><i></i><i></i><i></i><i></i><i class="l"></i><i class="l"></i><i class="l"></i><i class="l"></i><i class="l"></i><i class="l"></i><i class="l"></i><i class="l"></i><i class="l"></i><i class="l"></i><i class="l"></i><i class="l"></i><i class="l"></i><i class="l"></i><i class="l"></i><i class="l"></i><div class="n" style="top:378px">0<span style="margin-left:1px">..</span></div></div>
<div class="c"><div style="height:5px"></div><i></i><i></i><i></i><i></i><i></i><i></i><i></i><i></i><i></i><i></i><i></i><i></i><i></i><i></i><i></i><i class="l"></i><i class="l"></i><i class="l"></i><i class="l"></i><i class="l"></i><i class="l"></i><i class="l"></i><i class="l"></i><i class="l"></i><i class="l"></i><i class="l"></i><i class="l"></i><i class="l"></i><i class="l"></i><i class="l"></i><i class="l"></i><div class="n" style="top:378px">0<span style="margin-left:1px">..</span></div></div>
<div class="c"><div style="height:5px"></div><i></i><i></i><i></i><i></i><i></i><i></i><i></i><i></i><i></i><i></i><i></i><i></i><i></i><i></i><i></i><i class="l"></i><i class="l"></i><i class="l"></i><i class="l"></i><i class="l"></i><i class="l"></i><i class="l"></i><i class="l"></i><i class="l"></i><i class="l"></i><i class="l"></i><i class="l"></i><i class="l"></i><i class="l"></i><i class="l"></i><i class="l"></i><div class="n" style="top:378px">0<span style="margin-left:1px">..</span></div></div>
<div class="c"><div style="height:5px"></div><i></i><i></i><i></i><i></i><i></i><i></i><i></i><i></i><i></i><i></i><i class="l"></i><i class="l"></i><i class="l"></i><i class="l"></i><i class="l"></i><i class="l"></i><i class="l"></i><i class="l"></i><i class="l"></i><i class="l"></i><i class="l"></i><i class="l"></i><i class="l"></i><i class="l"></i><i class="l"></i><i class="l"></i><i class="l"></i><i class="l"></i><i class="l"></i><i class="l"></i><i class="l"></i><div class="n" style="top:378px"><svg width="5.6" height="11" viewBox="0 0 5.6 11" style="vertical-align:0;margin-left:-0.2px"><path d="M0.6 5.0 L4.3 2.1 L4.3 11" fill="none" stroke="#ccccdc" stroke-width="1.5"/></svg><span style="margin-left:0.6px">...</span></div></div>
<div class="c"><div style="height:5px"></div><i></i><i></i><i></i><i></i><i></i><i></i><i></i><i></i><i></i><i class="l"></i><i class="l"></i><i class="l"></i><i class="l"></i><i class="l"></i><i class="l"></i><i class="l"></i><i class="l"></i><i class="l"></i><i class="l"></i><i class="l"></i><i class="l"></i><i class="l"></i><i class="l"></i><i class="l"></i><i class="l"></i><i class="l"></i><i class="l"></i><i class="l"></i><i class="l"></i><i class="l"></i><i class="l"></i><div class="n" style="top:378px"><svg width="5.6" height="11" viewBox="0 0 5.6 11" style="vertical-align:0;margin-left:-0.2px"><path d="M0.6 5.0 L4.3 2.1 L4.3 11" fill="none" stroke="#ccccdc" stroke-width="1.5"/></svg><span style="margin-left:0.6px">...</span></div></div>
<div class="c"><div style="height:5px"></div><i></i><i></i><i></i><i></i><i></i><i></i><i></i><i></i><i></i><i></i><i></i><i></i><i></i><i></i><i></i><i></i><i></i><i class="l"></i><i class="l"></i><i class="l"></i><i class="l"></i><i class="l"></i><i class="l"></i><i class="l"></i><i class="l"></i><i class="l"></i><i class="l"></i><i class="l"></i><i class="l"></i><i class="l"></i><i class="l"></i><div class="n" style="top:378px"><svg width="5.6" height="11" viewBox="0 0 5.6 11" style="vertical-align:0;margin-left:-0.2px"><path d="M0.6 5.0 L4.3 2.1 L4.3 11" fill="none" stroke="#ccccdc" stroke-width="1.5"/></svg><span style="margin-left:0.6px">...</span></div></div>
<div class="c"><div style="height:5px"></div><i></i><i></i><i></i><i></i><i></i><i></i><i></i><i></i><i></i><i></i><i></i><i></i><i class="l"></i><i class="l"></i><i class="l"></i><i class="l"></i><i class="l"></i><i class="l"></i><i class="l"></i><i class="l"></i><i class="l"></i><i class="l"></i><i class="l"></i><i class="l"></i><i class="l"></i><i class="l"></i><i class="l"></i><i class="l"></i><i class="l"></i><i class="l"></i><i class="l"></i><div class="n" style="top:378px"><svg width="5.6" height="11" viewBox="0 0 5.6 11" style="vertical-align:0;margin-left:-0.2px"><path d="M0.6 5.0 L4.3 2.1 L4.3 11" fill="none" stroke="#ccccdc" stroke-width="1.5"/></svg><span style="margin-left:0.6px">...</span></div></div>
<div class="c"><div style="height:5px"></div><i></i><i></i><i></i><i></i><i></i><i></i><i></i><i class="l"></i><i class="l"></i><i class="l"></i><i class="l"></i><i class="l"></i><i class="l"></i><i class="l"></i><i class="l"></i><i class="l"></i><i class="l"></i><i class="l"></i><i class="l"></i><i class="l"></i><i class="l"></i><i class="l"></i><i class="l"></i><i class="l"></i><i class="l"></i><i class="l"></i><i class="l"></i><i class="l"></i><i class="l"></i><i class="l"></i><i class="l"></i><div class="n" style="top:378px"><svg width="5.6" height="11" viewBox="0 0 5.6 11" style="vertical-align:0;margin-left:-0.2px"><path d="M0.6 5.0 L4.3 2.1 L4.3 11" fill="none" stroke="#ccccdc" stroke-width="1.5"/></svg><span style="margin-left:0.6px">...</span></div></div>
<div class="c"><div style="height:5px"></div><i></i><i></i><i></i><i></i><i></i><i></i><i class="l"></i><i class="l"></i><i class="l"></i><i class="l"></i><i class="l"></i><i class="l"></i><i class="l"></i><i class="l"></i><i class="l"></i><i class="l"></i><i class="l"></i><i class="l"></i><i class="l"></i><i class="l"></i><i class="l"></i><i class="l"></i><i class="l"></i><i class="l"></i><i class="l"></i><i class="l"></i><i class="l"></i><i class="l"></i><i class="l"></i><i class="l"></i><i class="l"></i><div class="n" style="top:378px"><svg width="5.6" height="11" viewBox="0 0 5.6 11" style="vertical-align:0;margin-left:-0.2px"><path d="M0.6 5.0 L4.3 2.1 L4.3 11" fill="none" stroke="#ccccdc" stroke-width="1.5"/></svg><span style="margin-left:0.6px">...</span></div></div>
<div class="c"><div style="height:5px"></div><i></i><i></i><i></i><i></i><i></i><i></i><i class="l"></i><i class="l"></i><i class="l"></i><i class="l"></i><i class="l"></i><i class="l"></i><i class="l"></i><i class="l"></i><i class="l"></i><i class="l"></i><i class="l"></i><i class="l"></i><i class="l"></i><i class="l"></i><i class="l"></i><i class="l"></i><i class="l"></i><i class="l"></i><i class="l"></i><i class="l"></i><i class="l"></i><i class="l"></i><i class="l"></i><i class="l"></i><i class="l"></i><div class="n" style="top:378px"><svg width="5.6" height="11" viewBox="0 0 5.6 11" style="vertical-align:0;margin-left:-0.2px"><path d="M0.6 5.0 L4.3 2.1 L4.3 11" fill="none" stroke="#ccccdc" stroke-width="1.5"/></svg><span style="margin-left:0.6px">...</span></div></div>
<div class="c"><div style="height:5px"></div><i></i><i></i><i></i><i></i><i></i><i></i><i></i><i class="l"></i><i class="l"></i><i class="l"></i><i class="l"></i><i class="l"></i><i class="l"></i><i class="l"></i><i class="l"></i><i class="l"></i><i class="l"></i><i class="l"></i><i class="l"></i><i class="l"></i><i class="l"></i><i class="l"></i><i class="l"></i><i class="l"></i><i class="l"></i><i class="l"></i><i class="l"></i><i class="l"></i><i class="l"></i><i class="l"></i><i class="l"></i><div class="n" style="top:378px"><svg width="5.6" height="11" viewBox="0 0 5.6 11" style="vertical-align:0;margin-left:-0.2px"><path d="M0.6 5.0 L4.3 2.1 L4.3 11" fill="none" stroke="#ccccdc" stroke-width="1.5"/></svg><span style="margin-left:0.6px">...</span></div></div>
<div class="c"><div style="height:5px"></div><i></i><i></i><i></i><i class="l"></i><i class="l"></i><i class="l"></i><i class="l"></i><i class="l"></i><i class="l"></i><i class="l"></i><i class="l"></i><i class="l"></i><i class="l"></i><i class="l"></i><i class="l"></i><i class="l"></i><i class="l"></i><i class="l"></i><i class="l"></i><i class="l"></i><i class="l"></i><i class="l"></i><i class="l"></i><i class="l"></i><i class="l"></i><i class="l"></i><i class="l"></i><i class="l"></i><i class="l"></i><i class="l"></i><i class="l"></i><div class="n" style="top:378px"><svg width="5.6" height="11" viewBox="0 0 5.6 11" style="vertical-align:0;margin-left:-0.2px"><path d="M0.6 5.0 L4.3 2.1 L4.3 11" fill="none" stroke="#ccccdc" stroke-width="1.5"/></svg><span style="margin-left:0.6px">...</span></div></div>
<div class="c"><div style="height:5px"></div><i></i><i></i><i></i><i></i><i></i><i></i><i class="l"></i><i class="l"></i><i class="l"></i><i class="l"></i><i class="l"></i><i class="l"></i><i class="l"></i><i class="l"></i><i class="l"></i><i class="l"></i><i class="l"></i><i class="l"></i><i class="l"></i><i class="l"></i><i class="l"></i><i class="l"></i><i class="l"></i><i class="l"></i><i class="l"></i><i class="l"></i><i class="l"></i><i class="l"></i><i class="l"></i><i class="l"></i><i class="l"></i><div class="n" style="top:378px"><svg width="5.6" height="11" viewBox="0 0 5.6 11" style="vertical-align:0;margin-left:-0.2px"><path d="M0.6 5.0 L4.3 2.1 L4.3 11" fill="none" stroke="#ccccdc" stroke-width="1.5"/></svg><span style="margin-left:0.6px">...</span></div></div>
<div class="c"><div style="height:5px"></div><i></i><i class="l"></i><i class="l"></i><i class="l"></i><i class="l"></i><i class="l"></i><i class="l"></i><i class="l"></i><i class="l"></i><i class="l"></i><i class="l"></i><i class="l"></i><i class="l"></i><i class="l"></i><i class="l"></i><i class="l"></i><i class="l"></i><i class="l"></i><i class="l"></i><i class="l"></i><i class="l"></i><i class="l"></i><i class="l"></i><i class="l"></i><i class="l"></i><i class="l"></i><i class="l"></i><i class="l"></i><i class="l"></i><i class="l"></i><i class="l"></i><div class="n" style="top:378px"><svg width="5.6" height="11" viewBox="0 0 5.6 11" style="vertical-align:0;margin-left:-0.2px"><path d="M0.6 5.0 L4.3 2.1 L4.3 11" fill="none" stroke="#ccccdc" stroke-width="1.5"/></svg><span style="margin-left:0.6px">...</span></div></div>
<div class="c"><div style="height:5px"></div><i></i><i></i><i></i><i></i><i></i><i></i><i class="l"></i><i class="l"></i><i class="l"></i><i class="l"></i><i class="l"></i><i class="l"></i><i class="l"></i><i class="l"></i><i class="l"></i><i class="l"></i><i class="l"></i><i class="l"></i><i class="l"></i><i class="l"></i><i class="l"></i><i class="l"></i><i class="l"></i><i class="l"></i><i class="l"></i><i class="l"></i><i class="l"></i><i class="l"></i><i class="l"></i><i class="l"></i><i class="l"></i><div class="n" style="top:378px"><svg width="5.6" height="11" viewBox="0 0 5.6 11" style="vertical-align:0;margin-left:-0.2px"><path d="M0.6 5.0 L4.3 2.1 L4.3 11" fill="none" stroke="#ccccdc" stroke-width="1.5"/></svg><span style="margin-left:0.6px">...</span></div></div>
<div class="c"><div style="height:5px"></div><i class="l"></i><i class="l"></i><i class="l"></i><i class="l"></i><i class="l"></i><i class="l"></i><i class="l"></i><i class="l"></i><i class="l"></i><i class="l"></i><i class="l"></i><i class="l"></i><i class="l"></i><i class="l"></i><i class="l"></i><i class="l"></i><i class="l"></i><i class="l"></i><i class="l"></i><i class="l"></i><i class="l"></i><i class="l"></i><i class="l"></i><i class="l"></i><i class="l"></i><i class="l"></i><i class="l"></i><i class="l"></i><i class="l"></i><i class="l"></i><i class="l"></i><div class="n" style="top:378px"><svg width="5.6" height="11" viewBox="0 0 5.6 11" style="vertical-align:0;margin-left:-0.2px"><path d="M0.6 5.0 L4.3 2.1 L4.3 11" fill="none" stroke="#ccccdc" stroke-width="1.5"/></svg><span style="margin-left:0.6px">...</span></div></div>
<div class="c"><div style="height:5px"></div><i></i><i></i><i></i><i class="l"></i><i class="l"></i><i class="l"></i><i class="l"></i><i class="l"></i><i class="l"></i><i class="l"></i><i class="l"></i><i class="l"></i><i class="l"></i><i class="l"></i><i class="l"></i><i class="l"></i><i class="l"></i><i class="l"></i><i class="l"></i><i class="l"></i><i class="l"></i><i class="l"></i><i class="l"></i><i class="l"></i><i class="l"></i><i class="l"></i><i class="l"></i><i class="l"></i><i class="l"></i><i class="l"></i><i class="l"></i><div class="n" style="top:378px"><svg width="5.6" height="11" viewBox="0 0 5.6 11" style="vertical-align:0;margin-left:-0.2px"><path d="M0.6 5.0 L4.3 2.1 L4.3 11" fill="none" stroke="#ccccdc" stroke-width="1.5"/></svg><span style="margin-left:0.6px">...</span></div></div>
<div class="c"><div style="height:5px"></div><i class="l"></i><i class="l"></i><i class="l"></i><i class="l"></i><i class="l"></i><i class="l"></i><i class="l"></i><i class="l"></i><i class="l"></i><i class="l"></i><i class="l"></i><i class="l"></i><i class="l"></i><i class="l"></i><i class="l"></i><i class="l"></i><i class="l"></i><i class="l"></i><i class="l"></i><i class="l"></i><i class="l"></i><i class="l"></i><i class="l"></i><i class="l"></i><i class="l"></i><i class="l"></i><i class="l"></i><i class="l"></i><i class="l"></i><i class="l"></i><i class="l"></i><div class="n" style="top:378px"><svg width="5.6" height="11" viewBox="0 0 5.6 11" style="vertical-align:0;margin-left:-0.2px"><path d="M0.6 5.0 L4.3 2.1 L4.3 11" fill="none" stroke="#ccccdc" stroke-width="1.5"/></svg><span style="margin-left:0.6px">...</span></div></div>
<div class="c"><div style="height:5px"></div><i class="l"></i><i class="l"></i><i class="l"></i><i class="l"></i><i class="l"></i><i class="l"></i><i class="l"></i><i class="l"></i><i class="l"></i><i class="l"></i><i class="l"></i><i class="l"></i><i class="l"></i><i class="l"></i><i class="l"></i><i class="l"></i><i class="l"></i><i class="l"></i><i class="l"></i><i class="l"></i><i class="l"></i><i class="l"></i><i class="l"></i><i class="l"></i><i class="l"></i><i class="l"></i><i class="l"></i><i class="l"></i><i class="l"></i><i class="l"></i><i class="l"></i><div class="n" style="top:378px"><svg width="5.6" height="11" viewBox="0 0 5.6 11" style="vertical-align:0;margin-left:-0.2px"><path d="M0.6 5.0 L4.3 2.1 L4.3 11" fill="none" stroke="#ccccdc" stroke-width="1.5"/></svg><span style="margin-left:0.6px">...</span></div></div>
<div class="c"><div style="height:5px"></div><i></i><i></i><i></i><i></i><i></i><i></i><i></i><i></i><i></i><i></i><i></i><i></i><i></i><i></i><i></i><i></i><i></i><i></i><i></i><i class="l"></i><i class="l"></i><i class="l"></i><i class="l"></i><i class="l"></i><i class="l"></i><i class="l"></i><i class="l"></i><i class="l"></i><i class="l"></i><i class="l"></i><i class="l"></i><div class="n" style="top:378px">2<span style="margin-left:1px">..</span></div></div>
<div class="c"><div style="height:5px"></div><i></i><i></i><i></i><i></i><i></i><i></i><i></i><i></i><i></i><i></i><i></i><i></i><i></i><i></i><i></i><i></i><i></i><i></i><i></i><i class="l"></i><i class="l"></i><i class="l"></i><i class="l"></i><i class="l"></i><i class="l"></i><i class="l"></i><i class="l"></i><i class="l"></i><i class="l"></i><i class="l"></i><i class="l"></i><div class="n" style="top:378px">2<span style="margin-left:1px">..</span></div></div>
<div class="c"><div style="height:5px"></div><i></i><i></i><i></i><i></i><i></i><i></i><i></i><i></i><i></i><i></i><i></i><i></i><i></i><i></i><i></i><i></i><i></i><i></i><i></i><i class="l"></i><i class="l"></i><i class="l"></i><i class="l"></i><i class="l"></i><i class="l"></i><i class="l"></i><i class="l"></i><i class="l"></i><i class="l"></i><i class="l"></i><i class="l"></i><div class="n" style="top:378px">2<span style="margin-left:1px">..</span></div></div>
<div class="c"><div style="height:5px"></div><i></i><i></i><i></i><i></i><i></i><i></i><i></i><i></i><i></i><i></i><i></i><i></i><i></i><i></i><i></i><i></i><i></i><i></i><i></i><i class="l"></i><i class="l"></i><i class="l"></i><i class="l"></i><i class="l"></i><i class="l"></i><i class="l"></i><i class="l"></i><i class="l"></i><i class="l"></i><i class="l"></i><i class="l"></i><div class="n" style="top:378px">2<span style="margin-left:1px">..</span></div></div>
<div class="c"><div style="height:5px"></div><i></i><i></i><i></i><i></i><i></i><i></i><i></i><i></i><i></i><i></i><i></i><i></i><i></i><i></i><i></i><i></i><i></i><i></i><i></i><i class="l"></i><i class="l"></i><i class="l"></i><i class="l"></i><i class="l"></i><i class="l"></i><i class="l"></i><i class="l"></i><i class="l"></i><i class="l"></i><i class="l"></i><i class="l"></i><div class="n" style="top:378px">2<span style="margin-left:1px">..</span></div></div>
<div class="c"><div style="height:5px"></div><i></i><i></i><i></i><i></i><i></i><i></i><i></i><i></i><i></i><i></i><i></i><i></i><i></i><i></i><i></i><i></i><i></i><i></i><i></i><i class="l"></i><i class="l"></i><i class="l"></i><i class="l"></i><i class="l"></i><i class="l"></i><i class="l"></i><i class="l"></i><i class="l"></i><i class="l"></i><i class="l"></i><i class="l"></i><div class="n" style="top:378px">2<span style="margin-left:1px">..</span></div></div>
<div class="c"><div style="height:5px"></div><i></i><i></i><i></i><i></i><i></i><i></i><i></i><i></i><i></i><i></i><i></i><i></i><i></i><i></i><i></i><i></i><i></i><i></i><i></i><i class="l"></i><i class="l"></i><i class="l"></i><i class="l"></i><i class="l"></i><i class="l"></i><i class="l"></i><i class="l"></i><i class="l"></i><i class="l"></i><i class="l"></i><i class="l"></i><div class="n" style="top:378px">2<span style="margin-left:1px">..</span></div></div>
<div class="c"><div style="height:5px"></div><i></i><i></i><i></i><i></i><i></i><i></i><i></i><i></i><i></i><i></i><i></i><i></i><i></i><i></i><i></i><i></i><i></i><i></i><i></i><i></i><i class="l"></i><i class="l"></i><i class="l"></i><i class="l"></i><i class="l"></i><i class="l"></i><i class="l"></i><i class="l"></i><i class="l"></i><i class="l"></i><i class="l"></i><div class="n" style="top:378px">2<span style="margin-left:1px">..</span></div></div>
<div class="c"><div style="height:5px"></div><i></i><i></i><i></i><i></i><i></i><i></i><i></i><i></i><i></i><i></i><i></i><i></i><i></i><i></i><i></i><i></i><i></i><i></i><i></i><i></i><i class="l"></i><i class="l"></i><i class="l"></i><i class="l"></i><i class="l"></i><i class="l"></i><i class="l"></i><i class="l"></i><i class="l"></i><i class="l"></i><i class="l"></i><div class="n" style="top:378px">2<span style="margin-left:1px">..</span></div></div>
<div class="c"><div style="height:5px"></div><i></i><i></i><i></i><i></i><i></i><i></i><i></i><i></i><i></i><i></i><i></i><i></i><i></i><i></i><i></i><i></i><i></i><i></i><i></i><i></i><i class="l"></i><i class="l"></i><i class="l"></i><i class="l"></i><i class="l"></i><i class="l"></i><i class="l"></i><i class="l"></i><i class="l"></i><i class="l"></i><i class="l"></i><div class="n" style="top:378px">2<span style="margin-left:1px">..</span></div></div>
<div class="c"><div style="height:5px"></div><i></i><i></i><i></i><i></i><i></i><i></i><i></i><i></i><i></i><i></i><i></i><i></i><i></i><i></i><i></i><i></i><i></i><i></i><i></i><i class="l"></i><i class="l"></i><i class="l"></i><i class="l"></i><i class="l"></i><i class="l"></i><i class="l"></i><i class="l"></i><i class="l"></i><i class="l"></i><i class="l"></i><i class="l"></i><div class="n" style="top:378px">2<span style="margin-left:1px">..</span></div></div>
<div class="c"><div style="height:5px"></div><i></i><i></i><i></i><i></i><i></i><i></i><i></i><i></i><i></i><i></i><i></i><i></i><i></i><i></i><i></i><i></i><i></i><i></i><i></i><i></i><i></i><i></i><i class="l"></i><i class="l"></i><i class="l"></i><i class="l"></i><i class="l"></i><i class="l"></i><i class="l"></i><i class="l"></i><i class="l"></i><div class="n" style="top:378px">2<span style="margin-left:1px">..</span></div></div>
<div class="c"><div style="height:5px"></div><i></i><i></i><i></i><i></i><i></i><i></i><i></i><i></i><i></i><i></i><i></i><i></i><i></i><i></i><i></i><i></i><i></i><i></i><i></i><i></i><i></i><i></i><i></i><i></i><i class="l"></i><i class="l"></i><i class="l"></i><i class="l"></i><i class="l"></i><i class="l"></i><i class="l"></i><div class="n" style="top:378px">2<span style="margin-left:1px">..</span></div></div>
<div class="c"><div style="height:5px"></div><i></i><i></i><i></i><i></i><i></i><i></i><i></i><i></i><i></i><i></i><i></i><i></i><i></i><i></i><i></i><i></i><i></i><i></i><i></i><i></i><i></i><i></i><i></i><i></i><i class="l"></i><i class="l"></i><i class="l"></i><i class="l"></i><i class="l"></i><i class="l"></i><i class="l"></i><div class="n" style="top:378px">2<span style="margin-left:1px">..</span></div></div>
<div class="c"><div style="height:5px"></div><i></i><i></i><i></i><i></i><i></i><i></i><i></i><i></i><i></i><i></i><i></i><i></i><i></i><i></i><i></i><i></i><i></i><i></i><i></i><i></i><i></i><i></i><i></i><i></i><i class="l"></i><i class="l"></i><i class="l"></i><i class="l"></i><i class="l"></i><i class="l"></i><i class="l"></i><div class="n" style="top:378px">2<span style="margin-left:1px">..</span></div></div>
<div class="c"><div style="height:5px"></div><i></i><i></i><i></i><i></i><i></i><i></i><i></i><i></i><i></i><i></i><i></i><i></i><i></i><i></i><i></i><i></i><i></i><i></i><i></i><i></i><i class="l"></i><i class="l"></i><i class="l"></i><i class="l"></i><i class="l"></i><i class="l"></i><i class="l"></i><i class="l"></i><i class="l"></i><i class="l"></i><i class="l"></i><div class="n" style="top:378px">2<span style="margin-left:1px">..</span></div></div>
<div class="c"><div style="height:5px"></div><i></i><i></i><i></i><i></i><i></i><i></i><i></i><i></i><i></i><i></i><i></i><i></i><i></i><i></i><i></i><i></i><i></i><i></i><i></i><i></i><i></i><i></i><i></i><i></i><i class="l"></i><i class="l"></i><i class="l"></i><i class="l"></i><i class="l"></i><i class="l"></i><i class="l"></i><div class="n" style="top:378px">3<span style="margin-left:1px">..</span></div></div>
<div class="c"><div style="height:5px"></div><i></i><i></i><i></i><i></i><i></i><i></i><i></i><i></i><i></i><i></i><i></i><i></i><i></i><i></i><i></i><i></i><i></i><i></i><i></i><i></i><i></i><i></i><i></i><i class="l"></i><i class="l"></i><i class="l"></i><i class="l"></i><i class="l"></i><i class="l"></i><i class="l"></i><i class="l"></i><div class="n" style="top:378px">3<span style="margin-left:1px">..</span></div></div>
<div class="c"><div style="height:5px"></div><i></i><i></i><i></i><i></i><i></i><i></i><i></i><i></i><i></i><i></i><i></i><i></i><i></i><i></i><i></i><i></i><i></i><i></i><i></i><i></i><i></i><i></i><i></i><i class="l"></i><i class="l"></i><i class="l"></i><i class="l"></i><i class="l"></i><i class="l"></i><i class="l"></i><i class="l"></i><div class="n" style="top:378px">3<span style="margin-left:1px">..</span></div></div>
<div class="c"><div style="height:5px"></div><i></i><i></i><i></i><i></i><i></i><i></i><i></i><i></i><i></i><i></i><i></i><i></i><i></i><i></i><i></i><i></i><i></i><i></i><i></i><i></i><i></i><i></i><i></i><i></i><i class="l"></i><i class="l"></i><i class="l"></i><i class="l"></i><i class="l"></i><i class="l"></i><i class="l"></i><div class="n" style="top:378px">3<span style="margin-left:1px">..</span></div></div>
<div class="c"><div style="height:5px"></div><i></i><i></i><i></i><i></i><i></i><i></i><i></i><i></i><i></i><i></i><i></i><i></i><i></i><i></i><i></i><i></i><i></i><i></i><i></i><i></i><i></i><i></i><i></i><i class="l"></i><i class="l"></i><i class="l"></i><i class="l"></i><i class="l"></i><i class="l"></i><i class="l"></i><i class="l"></i><div class="n" style="top:378px">3<span style="margin-left:1px">..</span></div></div>
<div class="c"><div style="height:5px"></div><i></i><i></i><i></i><i></i><i></i><i></i><i></i><i></i><i></i><i></i><i></i><i></i><i></i><i></i><i></i><i></i><i></i><i></i><i></i><i></i><i></i><i></i><i></i><i class="l"></i><i class="l"></i><i class="l"></i><i class="l"></i><i class="l"></i><i class="l"></i><i class="l"></i><i class="l"></i><div class="n" style="top:378px">3<span style="margin-left:1px">..</span></div></div>
<div class="c"><div style="height:5px"></div><i></i><i></i><i></i><i></i><i></i><i></i><i></i><i></i><i></i><i></i><i></i><i></i><i></i><i></i><i></i><i></i><i></i><i></i><i></i><i></i><i></i><i></i><i></i><i></i><i class="l"></i><i class="l"></i><i class="l"></i><i class="l"></i><i class="l"></i><i class="l"></i><i class="l"></i><div class="n" style="top:378px">3<span style="margin-left:1px">..</span></div></div>
<div class="c"><div style="height:5px"></div><i></i><i></i><i></i><i></i><i></i><i></i><i></i><i></i><i></i><i></i><i></i><i></i><i></i><i></i><i></i><i></i><i></i><i></i><i></i><i></i><i></i><i></i><i></i><i class="l"></i><i class="l"></i><i class="l"></i><i class="l"></i><i class="l"></i><i class="l"></i><i class="l"></i><i class="l"></i><div class="n" style="top:378px">3<span style="margin-left:1px">..</span></div></div>
<div class="c"><div style="height:5px"></div><i></i><i></i><i></i><i></i><i></i><i></i><i></i><i></i><i></i><i></i><i></i><i></i><i></i><i></i><i></i><i></i><i></i><i></i><i></i><i></i><i></i><i></i><i></i><i class="l"></i><i class="l"></i><i class="l"></i><i class="l"></i><i class="l"></i><i class="l"></i><i class="l"></i><i class="l"></i><div class="n" style="top:378px">3<span style="margin-left:1px">..</span></div></div>
<div class="c"><div style="height:5px"></div><i></i><i></i><i></i><i></i><i></i><i></i><i></i><i></i><i></i><i></i><i></i><i></i><i></i><i></i><i></i><i></i><i></i><i></i><i></i><i></i><i></i><i></i><i></i><i class="l"></i><i class="l"></i><i class="l"></i><i class="l"></i><i class="l"></i><i class="l"></i><i class="l"></i><i class="l"></i><div class="n" style="top:378px">3<span style="margin-left:1px">..</span></div></div>
<div class="c"><div style="height:5px"></div><i></i><i></i><i></i><i></i><i></i><i></i><i></i><i></i><i></i><i></i><i></i><i></i><i></i><i></i><i></i><i></i><i></i><i></i><i></i><i></i><i></i><i></i><i></i><i class="l"></i><i class="l"></i><i class="l"></i><i class="l"></i><i class="l"></i><i class="l"></i><i class="l"></i><i class="l"></i><div class="n" style="top:378px">3<span style="margin-left:1px">..</span></div></div>
<div class="c"><div style="height:5px"></div><i></i><i></i><i></i><i></i><i></i><i></i><i></i><i></i><i></i><i></i><i></i><i></i><i></i><i></i><i></i><i></i><i></i><i></i><i></i><i></i><i></i><i></i><i></i><i></i><i class="l"></i><i class="l"></i><i class="l"></i><i class="l"></i><i class="l"></i><i class="l"></i><i class="l"></i><div class="n" style="top:378px">3<span style="margin-left:1px">..</span></div></div>
<div class="c"><div style="height:5px"></div><i></i><i></i><i></i><i></i><i></i><i></i><i></i><i></i><i></i><i></i><i></i><i></i><i></i><i></i><i></i><i></i><i></i><i></i><i></i><i></i><i></i><i></i><i></i><i></i><i class="l"></i><i class="l"></i><i class="l"></i><i class="l"></i><i class="l"></i><i class="l"></i><i class="l"></i><div class="n" style="top:378px">3<span style="margin-left:1px">..</span></div></div>
<div class="c"><div style="height:5px"></div><i></i><i></i><i></i><i></i><i></i><i></i><i></i><i></i><i></i><i></i><i></i><i></i><i></i><i></i><i></i><i></i><i></i><i></i><i></i><i></i><i></i><i></i><i></i><i></i><i class="l"></i><i class="l"></i><i class="l"></i><i class="l"></i><i class="l"></i><i class="l"></i><i class="l"></i><div class="n" style="top:378px">3<span style="margin-left:1px">..</span></div></div>
<div class="c"><div style="height:5px"></div><i></i><i></i><i></i><i></i><i></i><i></i><i></i><i></i><i></i><i></i><i></i><i></i><i></i><i></i><i></i><i></i><i></i><i></i><i></i><i></i><i></i><i></i><i></i><i></i><i class="l"></i><i class="l"></i><i class="l"></i><i class="l"></i><i class="l"></i><i class="l"></i><i class="l"></i><div class="n" style="top:378px">3<span style="margin-left:1px">..</span></div></div>
<div class="c"><div style="height:5px"></div><i></i><i></i><i></i><i></i><i></i><i></i><i></i><i></i><i></i><i></i><i></i><i></i><i></i><i></i><i></i><i></i><i></i><i></i><i></i><i></i><i></i><i></i><i></i><i></i><i></i><i class="l"></i><i class="l"></i><i class="l"></i><i class="l"></i><i class="l"></i><i class="l"></i><div class="n" style="top:378px">3<span style="margin-left:1px">..</span></div></div>
<div class="c"><div style="height:5px"></div><i></i><i></i><i></i><i></i><i></i><i></i><i></i><i></i><i></i><i></i><i></i><i></i><i></i><i></i><i></i><i></i><i></i><i></i><i></i><i></i><i class="l"></i><i class="l"></i><i class="l"></i><i class="l"></i><i class="l"></i><i class="l"></i><i class="l"></i><i class="l"></i><i class="l"></i><i class="l"></i><i class="l"></i><div class="n" style="top:378px">4<span style="margin-left:1px">..</span></div></div>
<div class="c"><div style="height:5px"></div><i></i><i></i><i></i><i></i><i></i><i></i><i></i><i></i><i></i><i></i><i></i><i></i><i class="l"></i><i class="l"></i><i class="l"></i><i class="l"></i><i class="l"></i><i class="l"></i><i class="l"></i><i class="l"></i><i class="l"></i><i class="l"></i><i class="l"></i><i class="l"></i><i class="l"></i><i class="l"></i><i class="l"></i><i class="l"></i><i class="l"></i><i class="l"></i><i class="l"></i><div class="n" style="top:378px">4<span style="margin-left:1px">..</span></div></div>
<div class="c"><div style="height:5px"></div><i></i><i></i><i></i><i></i><i></i><i></i><i></i><i></i><i></i><i></i><i></i><i></i><i></i><i></i><i></i><i></i><i></i><i></i><i class="l"></i><i class="l"></i><i class="l"></i><i class="l"></i><i class="l"></i><i class="l"></i><i class="l"></i><i class="l"></i><i class="l"></i><i class="l"></i><i class="l"></i><i class="l"></i><i class="l"></i><div class="n" style="top:378px">4<span style="margin-left:1px">..</span></div></div>
<div class="c"><div style="height:5px"></div><i></i><i></i><i></i><i></i><i></i><i></i><i></i><i></i><i></i><i></i><i></i><i></i><i></i><i></i><i></i><i></i><i></i><i></i><i></i><i></i><i></i><i class="l"></i><i class="l"></i><i class="l"></i><i class="l"></i><i class="l"></i><i class="l"></i><i class="l"></i><i class="l"></i><i class="l"></i><i class="l"></i><div class="n" style="top:378px">4<span style="margin-left:1px">..</span></div></div>
<div class="c"><div style="height:5px"></div><i></i><i></i><i></i><i></i><i></i><i></i><i class="l"></i><i class="l"></i><i class="l"></i><i class="l"></i><i class="l"></i><i class="l"></i><i class="l"></i><i class="l"></i><i class="l"></i><i class="l"></i><i class="l"></i><i class="l"></i><i class="l"></i><i class="l"></i><i class="l"></i><i class="l"></i><i class="l"></i><i class="l"></i><i class="l"></i><i class="l"></i><i class="l"></i><i class="l"></i><i class="l"></i><i class="l"></i><i class="l"></i><div class="n" style="top:378px">4<span style="margin-left:1px">..</span></div></div>
<div class="c"><div style="height:5px"></div><i></i><i></i><i></i><i></i><i></i><i></i><i></i><i></i><i></i><i></i><i></i><i></i><i></i><i></i><i></i><i></i><i></i><i></i><i class="l"></i><i class="l"></i><i class="l"></i><i class="l"></i><i class="l"></i><i class="l"></i><i class="l"></i><i class="l"></i><i class="l"></i><i class="l"></i><i class="l"></i><i class="l"></i><i class="l"></i><div class="n" style="top:378px">4<span style="margin-left:1px">..</span></div></div>
<div class="c"><div style="height:5px"></div><i></i><i></i><i></i><i></i><i></i><i></i><i></i><i></i><i></i><i class="l"></i><i class="l"></i><i class="l"></i><i class="l"></i><i class="l"></i><i class="l"></i><i class="l"></i><i class="l"></i><i class="l"></i><i class="l"></i><i class="l"></i><i class="l"></i><i class="l"></i><i class="l"></i><i class="l"></i><i class="l"></i><i class="l"></i><i class="l"></i><i class="l"></i><i class="l"></i><i class="l"></i><i class="l"></i><div class="n" style="top:378px">4<span style="margin-left:1px">..</span></div></div>
<div class="c"><div style="height:5px"></div><i></i><i></i><i></i><i></i><i></i><i></i><i></i><i></i><i></i><i></i><i></i><i></i><i></i><i></i><i class="l"></i><i class="l"></i><i class="l"></i><i class="l"></i><i class="l"></i><i class="l"></i><i class="l"></i><i class="l"></i><i class="l"></i><i class="l"></i><i class="l"></i><i class="l"></i><i class="l"></i><i class="l"></i><i class="l"></i><i class="l"></i><i class="l"></i><div class="n" style="top:378px">4<span style="margin-left:1px">..</span></div></div>
<div class="c"><div style="height:5px"></div><i></i><i></i><i></i><i></i><i></i><i></i><i></i><i></i><i></i><i></i><i></i><i></i><i></i><i></i><i></i><i></i><i></i><i></i><i></i><i></i><i></i><i></i><i></i><i></i><i class="l"></i><i class="l"></i><i class="l"></i><i class="l"></i><i class="l"></i><i class="l"></i><i class="l"></i><div class="n" style="top:378px">4<span style="margin-left:1px">..</span></div></div>
<div class="c"><div style="height:5px"></div><i></i><i></i><i></i><i></i><i></i><i></i><i></i><i></i><i></i><i></i><i></i><i></i><i></i><i></i><i></i><i></i><i></i><i></i><i></i><i></i><i></i><i class="l"></i><i class="l"></i><i class="l"></i><i class="l"></i><i class="l"></i><i class="l"></i><i class="l"></i><i class="l"></i><i class="l"></i><i class="l"></i><div class="n" style="top:378px">4<span style="margin-left:1px">..</span></div></div>
<div class="c"><div style="height:5px"></div><i></i><i></i><i></i><i></i><i></i><i></i><i></i><i></i><i></i><i></i><i></i><i></i><i></i><i></i><i></i><i></i><i></i><i></i><i></i><i></i><i></i><i></i><i></i><i></i><i></i><i></i><i class="l"></i><i class="l"></i><i class="l"></i><i class="l"></i><i class="l"></i><div class="n" style="top:378px">4<span style="margin-left:1px">..</span></div></div>
<div class="c"><div style="height:5px"></div><i></i><i></i><i></i><i></i><i></i><i></i><i></i><i></i><i></i><i></i><i></i><i></i><i></i><i></i><i></i><i></i><i></i><i></i><i></i><i></i><i></i><i></i><i></i><i></i><i></i><i></i><i></i><i></i><i></i><i></i><i class="l"></i><div class="n" style="top:378px">4<span style="margin-left:1px">..</span></div></div>
<div class="c"><div style="height:5px"></div><i></i><i></i><i></i><i></i><i></i><i></i><i></i><i></i><i></i><i></i><i></i><i></i><i></i><i></i><i></i><i></i><i></i><i></i><i></i><i></i><i></i><i></i><i></i><i></i><i></i><i class="l"></i><i class="l"></i><i class="l"></i><i class="l"></i><i class="l"></i><i class="l"></i><div class="n" style="top:378px">4<span style="margin-left:1px">..</span></div></div>
<div class="c"><div style="height:5px"></div><i></i><i></i><i></i><i></i><i></i><i></i><i></i><i></i><i></i><i></i><i></i><i></i><i></i><i></i><i></i><i></i><i></i><i></i><i></i><i></i><i></i><i></i><i></i><i></i><i class="l"></i><i class="l"></i><i class="l"></i><i class="l"></i><i class="l"></i><i class="l"></i><i class="l"></i><div class="n" style="top:378px">4<span style="margin-left:1px">..</span></div></div>
<div class="c"><div style="height:5px"></div><i></i><i></i><i></i><i></i><i></i><i></i><i></i><i></i><i></i><i></i><i></i><i></i><i></i><i></i><i></i><i></i><i></i><i></i><i></i><i></i><i></i><i></i><i></i><i></i><i></i><i></i><i></i><i class="l"></i><i class="l"></i><i class="l"></i><i class="l"></i><div class="n" style="top:378px">4<span style="margin-left:1px">..</span></div></div>
<div class="c"><div style="height:5px"></div><i></i><i></i><i></i><i></i><i></i><i></i><i></i><i></i><i></i><i></i><i></i><i></i><i></i><i></i><i></i><i></i><i></i><i></i><i></i><i></i><i></i><i></i><i></i><i></i><i></i><i></i><i></i><i class="l"></i><i class="l"></i><i class="l"></i><i class="l"></i><div class="n" style="top:378px">4<span style="margin-left:1px">..</span></div></div>
<div class="c"><div style="height:5px"></div><i></i><i></i><i></i><i></i><i></i><i></i><i></i><i></i><i></i><i></i><i></i><i></i><i></i><i></i><i></i><i></i><i></i><i></i><i></i><i></i><i></i><i></i><i></i><i></i><i></i><i></i><i></i><i></i><i class="l"></i><i class="l"></i><i class="l"></i><div class="n" style="top:378px">5<span style="margin-left:1px">..</span></div></div>
<div class="c"><div style="height:5px"></div><i></i><i></i><i></i><i></i><i></i><i></i><i></i><i></i><i></i><i></i><i></i><i></i><i></i><i></i><i></i><i></i><i></i><i></i><i></i><i></i><i></i><i></i><i></i><i></i><i></i><i></i><i></i><i></i><i></i><i></i><i class="l"></i><div class="n" style="top:378px">5<span style="margin-left:1px">..</span></div></div>
<div class="c"><div style="height:5px"></div><i></i><i></i><i></i><i></i><i></i><i></i><i></i><i></i><i></i><i></i><i></i><i></i><i></i><i></i><i></i><i></i><i></i><i></i><i></i><i></i><i></i><i></i><i></i><i></i><i class="l"></i><i class="l"></i><i class="l"></i><i class="l"></i><i class="l"></i><i class="l"></i><i class="l"></i><div class="n" style="top:378px">5<span style="margin-left:1px">..</span></div></div>
<div class="c"><div style="height:5px"></div><i></i><i></i><i></i><i></i><i></i><i></i><i></i><i></i><i></i><i></i><i></i><i></i><i></i><i></i><i></i><i></i><i></i><i></i><i></i><i></i><i></i><i></i><i></i><i></i><i></i><i></i><i></i><i class="l"></i><i class="l"></i><i class="l"></i><i class="l"></i><div class="n" style="top:378px">5<span style="margin-left:1px">..</span></div></div>
<div class="c"><div style="height:5px"></div><i></i><i></i><i></i><i></i><i></i><i></i><i></i><i></i><i></i><i></i><i></i><i></i><i></i><i></i><i></i><i></i><i></i><i></i><i></i><i></i><i></i><i></i><i></i><i></i><i></i><i class="l"></i><i class="l"></i><i class="l"></i><i class="l"></i><i class="l"></i><i class="l"></i><div class="n" style="top:378px">5<span style="margin-left:1px">..</span></div></div>
<div class="c"><div style="height:5px"></div><i></i><i></i><i></i><i></i><i></i><i></i><i></i><i></i><i></i><i></i><i></i><i></i><i></i><i></i><i></i><i></i><i></i><i></i><i></i><i></i><i></i><i></i><i></i><i></i><i class="l"></i><i class="l"></i><i class="l"></i><i class="l"></i><i class="l"></i><i class="l"></i><i class="l"></i><div class="n" style="top:378px">5<span style="margin-left:1px">..</span></div></div>
<div class="c"><div style="height:5px"></div><i></i><i></i><i></i><i></i><i></i><i></i><i></i><i></i><i></i><i></i><i></i><i></i><i></i><i></i><i></i><i></i><i></i><i></i><i></i><i></i><i></i><i></i><i></i><i class="l"></i><i class="l"></i><i class="l"></i><i class="l"></i><i class="l"></i><i class="l"></i><i class="l"></i><i class="l"></i><div class="n" style="top:378px">5<span style="margin-left:1px">..</span></div></div>
<div class="c"><div style="height:5px"></div><i></i><i></i><i></i><i></i><i></i><i></i><i></i><i></i><i></i><i></i><i></i><i></i><i></i><i></i><i></i><i></i><i></i><i></i><i></i><i></i><i></i><i></i><i></i><i class="l"></i><i class="l"></i><i class="l"></i><i class="l"></i><i class="l"></i><i class="l"></i><i class="l"></i><i class="l"></i><div class="n" style="top:378px">5<span style="margin-left:1px">..</span></div></div>
<div class="c"><div style="height:5px"></div><i></i><i></i><i></i><i></i><i></i><i></i><i></i><i></i><i></i><i></i><i></i><i></i><i></i><i></i><i></i><i></i><i></i><i></i><i></i><i></i><i></i><i></i><i></i><i></i><i></i><i></i><i></i><i></i><i class="l"></i><i class="l"></i><i class="l"></i><div class="n" style="top:378px">5<span style="margin-left:1px">..</span></div></div>
<div class="c"><div style="height:5px"></div><i></i><i></i><i></i><i></i><i></i><i></i><i></i><i></i><i></i><i></i><i></i><i></i><i></i><i></i><i></i><i></i><i></i><i></i><i></i><i></i><i></i><i></i><i></i><i></i><i></i><i class="l"></i><i class="l"></i><i class="l"></i><i class="l"></i><i class="l"></i><i class="l"></i><div class="n" style="top:378px">5<span style="margin-left:1px">..</span></div></div>
<div class="c"><div style="height:5px"></div><i></i><i></i><i></i><i></i><i></i><i></i><i></i><i></i><i></i><i></i><i></i><i></i><i></i><i></i><i></i><i></i><i></i><i></i><i></i><i></i><i></i><i></i><i></i><i></i><i class="l"></i><i class="l"></i><i class="l"></i><i class="l"></i><i class="l"></i><i class="l"></i><i class="l"></i><div class="n" style="top:378px">5<span style="margin-left:1px">..</span></div></div>
<div class="c"><div style="height:5px"></div><i></i><i></i><i></i><i></i><i></i><i></i><i></i><i></i><i></i><i></i><i></i><i></i><i></i><i></i><i></i><i></i><i></i><i></i><i></i><i></i><i></i><i></i><i></i><i></i><i></i><i class="l"></i><i class="l"></i><i class="l"></i><i class="l"></i><i class="l"></i><i class="l"></i><div class="n" style="top:378px">5<span style="margin-left:1px">..</span></div></div>
<div class="c"><div style="height:5px"></div><i></i><i></i><i></i><i></i><i></i><i></i><i></i><i></i><i></i><i></i><i></i><i></i><i></i><i></i><i></i><i></i><i></i><i></i><i></i><i></i><i></i><i></i><i></i><i></i><i></i><i></i><i class="l"></i><i class="l"></i><i class="l"></i><i class="l"></i><i class="l"></i><div class="n" style="top:378px">5<span style="margin-left:1px">..</span></div></div>
<div class="c"><div style="height:5px"></div><i></i><i></i><i></i><i></i><i></i><i></i><i></i><i></i><i></i><i></i><i></i><i></i><i></i><i></i><i></i><i></i><i></i><i></i><i></i><i></i><i></i><i></i><i></i><i></i><i></i><i></i><i class="l"></i><i class="l"></i><i class="l"></i><i class="l"></i><i class="l"></i><div class="n" style="top:378px">5<span style="margin-left:1px">..</span></div></div>
<div class="c"><div style="height:5px"></div><i></i><i></i><i></i><i></i><i></i><i></i><i></i><i></i><i></i><i></i><i></i><i></i><i></i><i></i><i></i><i></i><i></i><i></i><i></i><i></i><i></i><i></i><i></i><i></i><i></i><i></i><i></i><i></i><i></i><i class="l"></i><i class="l"></i><div class="n" style="top:378px">5<span style="margin-left:1px">..</span></div></div>
<div class="c"><div style="height:5px"></div><i></i><i></i><i></i><i></i><i></i><i></i><i></i><i></i><i></i><i></i><i></i><i></i><i></i><i></i><i></i><i></i><i></i><i></i><i></i><i></i><i></i><i></i><i></i><i></i><i></i><i></i><i></i><i class="l"></i><i class="l"></i><i class="l"></i><i class="l"></i><div class="n" style="top:378px">5<span style="margin-left:1px">..</span></div></div>
</div>
</body></html>
